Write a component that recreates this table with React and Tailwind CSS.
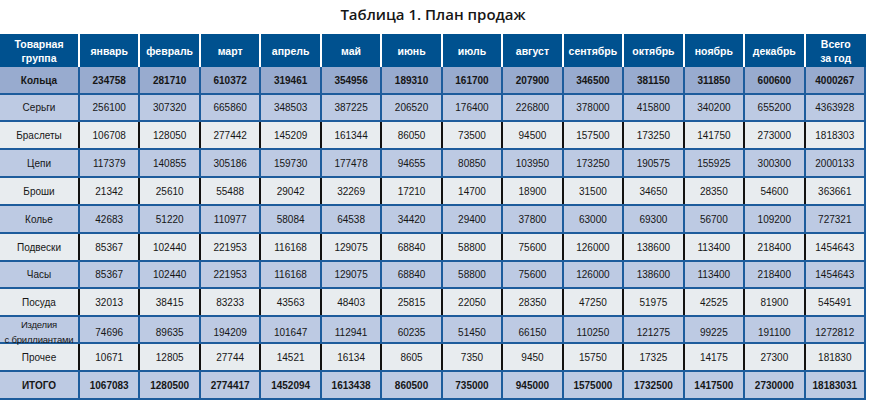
import React from "react";

const months = ["январь", "февраль", "март", "апрель", "май", "июнь", "июль", "август", "сентябрь", "октябрь", "ноябрь", "декабрь"];

const rows = [
    { name: "Кольца", tone: "dark", bold: true, h: "h-[28px]", values: [234758, 281710, 610372, 319461, 354956, 189310, 161700, 207900, 346500, 381150, 311850, 600600, 4000267] },
    { name: "Серьги", tone: "blue", h: "h-[27px]", values: [256100, 307320, 665860, 348503, 387225, 206520, 176400, 226800, 378000, 415800, 340200, 655200, 4363928] },
    { name: "Браслеты", tone: "light", h: "h-[28px]", values: [106708, 128050, 277442, 145209, 161344, 86050, 73500, 94500, 157500, 173250, 141750, 273000, 1818303] },
    { name: "Цепи", tone: "blue", h: "h-[28px]", values: [117379, 140855, 305186, 159730, 177478, 94655, 80850, 103950, 173250, 190575, 155925, 300300, 2000133] },
    { name: "Броши", tone: "light", h: "h-[28px]", values: [21342, 25610, 55488, 29042, 32269, 17210, 14700, 18900, 31500, 34650, 28350, 54600, 363661] },
    { name: "Колье", tone: "blue", h: "h-[28px]", values: [42683, 51220, 110977, 58084, 64538, 34420, 29400, 37800, 63000, 69300, 56700, 109200, 727321] },
    { name: "Подвески", tone: "light", h: "h-[28px]", values: [85367, 102440, 221953, 116168, 129075, 68840, 58800, 75600, 126000, 138600, 113400, 218400, 1454643] },
    { name: "Часы", tone: "blue", h: "h-[27px]", values: [85367, 102440, 221953, 116168, 129075, 68840, 58800, 75600, 126000, 138600, 113400, 218400, 1454643] },
    { name: "Посуда", tone: "light", h: "h-[28px]", values: [32013, 38415, 83233, 43563, 48403, 25815, 22050, 28350, 47250, 51975, 42525, 81900, 545491] },
    { name: ["Изделия", "с бриллиантами"], tone: "blue", h: "h-[27px]", values: [74696, 89635, 194209, 101647, 112941, 60235, 51450, 66150, 110250, 121275, 99225, 191100, 1272812] },
    { name: "Прочее", tone: "light", h: "h-[28px]", values: [10671, 12805, 27744, 14521, 16134, 8605, 7350, 9450, 15750, 17325, 14175, 27300, 181830] },
    { name: "ИТОГО", tone: "blue", bold: true, h: "h-[28px]", values: [1067083, 1280500, 2774417, 1452094, 1613438, 860500, 735000, 945000, 1575000, 1732500, 1417500, 2730000, 18183031] },
];

const tones = {
    dark: "bg-[#98abcf]",
    blue: "bg-[#bdcae3]",
    light: "bg-[#e8ecef]",
};

const lines = {
    dark: "border-[#1d5c9c]",
    blue: "border-[#1d5c9c]",
    light: "border-[#111111]",
};

const App = () => {
    return (
        <div className="w-[880px] h-[410px] bg-white pt-[3px]" style={{ fontFamily: '"Liberation Sans", Arial, sans-serif' }}>
            <div className="w-[866px] text-center text-[15px] leading-[22px] text-[#161616] font-['Open_Sans',sans-serif] font-semibold">
                Таблица 1. План продаж
            </div>

            <div className="mt-[9px] w-[866px] text-[10px] text-[#161616]">
                {/* header */}
                <div className="grid grid-cols-[80px_repeat(13,1fr)] h-[33px] bg-[#00518f] text-white font-bold text-[10.5px] leading-[14px] text-center">
                    <div className="flex items-center justify-center border-r-2 border-white">Товарная<br />группа</div>
                    {months.map(m => (
                        <div key={m} className="flex items-center justify-center border-r-2 border-white">{m}</div>
                    ))}
                    <div className="flex items-center justify-center">Всего<br />за год</div>
                </div>

                {rows.map((r, i) => (
                    <div
                        key={i}
                        className={`grid grid-cols-[80px_repeat(13,1fr)] ${r.h} ${tones[r.tone]} border-b-2 border-[#1d5c9c] text-center ${r.bold ? "font-bold" : ""}`}
                    >
                        <div className={`flex items-center justify-center border-r-2 ${lines[r.tone]}`}>
                            {Array.isArray(r.name) ? (
                                <span className="text-[9.5px] leading-[15px] tracking-[-0.2px] whitespace-nowrap">{r.name[0]}<br />{r.name[1]}</span>
                            ) : r.name}
                        </div>
                        {r.values.map((v, j) => (
                            <div
                                key={j}
                                className={`flex items-center justify-center border-r-2 ${j === r.values.length - 1 ? "border-[#1d5c9c]" : lines[r.tone]}`}
                            >
                                {v}
                            </div>
                        ))}
                    </div>
                ))}
            </div>
        </div>
    );
};

export default App;
